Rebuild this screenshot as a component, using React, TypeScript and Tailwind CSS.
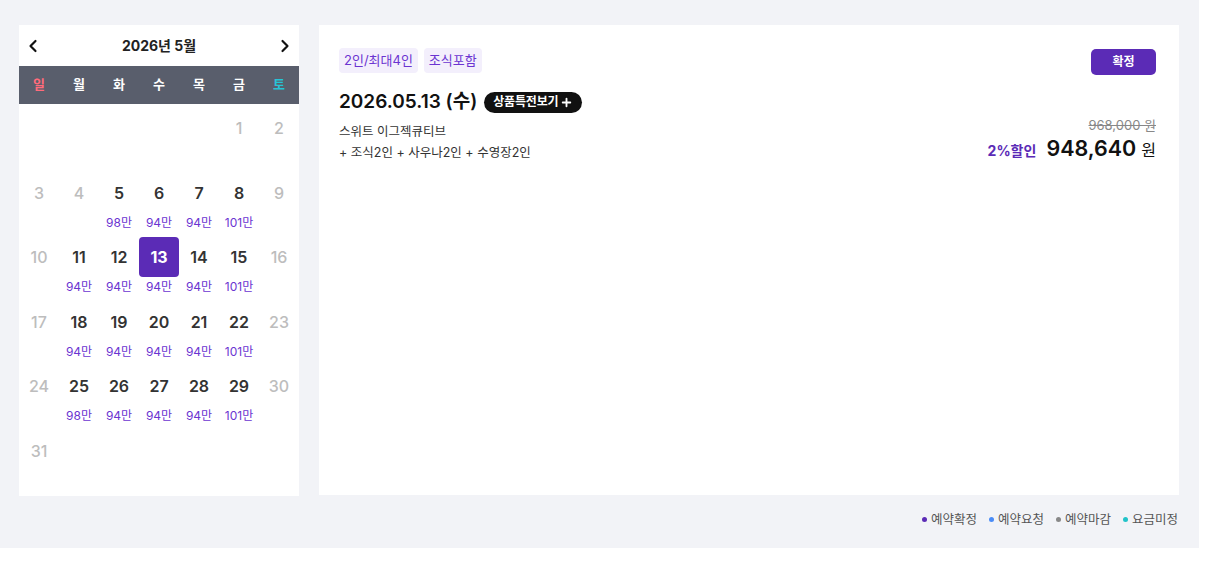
import { ChevronLeft, ChevronRight, Plus } from "lucide-react";

const prices: Record<number, string> = {
    5: "98만", 6: "94만", 7: "94만", 8: "101만",
    11: "94만", 12: "94만", 13: "94만", 14: "94만", 15: "101만",
    18: "94만", 19: "94만", 20: "94만", 21: "94만", 22: "101만",
    25: "98만", 26: "94만", 27: "94만", 28: "94만", 29: "101만",
};

const weekdays = ["일", "월", "화", "수", "목", "금", "토"];

const Calendar = () => {
    // 2026년 5월 1일은 금요일
    const cells: (number | null)[] = [null, null, null, null, null];
    for (let d = 1; d <= 31; d++) cells.push(d);
    while (cells.length % 7 !== 0) cells.push(null);
    const rows: (number | null)[][] = [];
    for (let i = 0; i < cells.length; i += 7) rows.push(cells.slice(i, i + 7));

    return (
        <div className="w-[280px] shrink-0 bg-white self-start">
            <div className="h-[41px] flex items-center justify-between px-[4px]">
                <ChevronLeft size={20} strokeWidth={2.6} className="text-[#111]" />
                <span className="text-[14px] font-bold text-[#222]">2026년 5월</span>
                <ChevronRight size={20} strokeWidth={2.6} className="text-[#111]" />
            </div>
            <div className="grid grid-cols-7 h-[38px] bg-[#595e6c] items-center text-center text-[13px] font-bold text-white">
                {weekdays.map((w, i) => (
                    <span key={w} className={i === 0 ? "text-[#ff6b7b]" : i === 6 ? "text-[#27c3d6]" : ""}>
                        {w}
                    </span>
                ))}
            </div>
            <div className="pb-[4px]">
                {rows.map((row, ri) => (
                    <div key={ri} className="grid grid-cols-7 h-[64.6px] pt-[4px]">
                        {row.map((d, ci) => {
                            if (d === null) return <div key={ci} />;
                            const price = prices[d];
                            const selected = d === 13;
                            return (
                                <div key={ci} className="flex flex-col items-center">
                                    <div
                                        className={
                                            "w-10 h-10 flex items-center justify-center rounded-[4px] text-[16px] " +
                                            (selected
                                                ? "bg-[#5b2bb6] text-white font-bold"
                                                : price
                                                ? "text-[#333] font-semibold"
                                                : "text-[#bdbdbd] font-medium")
                                        }
                                    >
                                        {d}
                                    </div>
                                    {price && (
                                        <span className="h-[20px] leading-[20px] text-[12px] text-[#6b34d1]">{price}</span>
                                    )}
                                </div>
                            );
                        })}
                    </div>
                ))}
            </div>
        </div>
    );
};

const App = () => {
    return (
        <div className="w-[1199px] h-[548px] bg-[#f2f3f7] pt-[25px] pl-[19px] pr-[20px] font-['Inter','Noto_Sans_CJK_KR',sans-serif]">
            <div className="flex gap-[20px] items-start">
                <Calendar />
                <div className="flex-1 h-[470px] bg-white pl-[20px] pr-[23px] pt-[23px]">
                    <div className="flex justify-between items-start">
                        <div className="flex gap-[6px]">
                            <span className="h-[25px] px-[5px] flex items-center rounded-[4px] bg-[#f3effc] text-[13px] text-[#6b34d1]">
                                2인/최대4인
                            </span>
                            <span className="h-[25px] px-[5px] flex items-center rounded-[4px] bg-[#f3effc] text-[13px] text-[#6b34d1]">
                                조식포함
                            </span>
                        </div>
                        <button className="w-[65px] h-[26px] mt-[1px] rounded-[5px] bg-[#5b2bb6] text-white text-[12px] font-bold">
                            확정
                        </button>
                    </div>
                    <div className="flex justify-between items-end mt-[13px]">
                        <div>
                            <div className="flex items-center gap-[7px]">
                                <span className="text-[19px] font-semibold text-[#111] leading-[28px]">2026.05.13 (수)</span>
                                <span className="h-[21px] px-[9px] flex items-center gap-[2px] rounded-full bg-[#111] text-white text-[12px] font-bold tracking-[-0.2px]">
                                    상품특전보기
                                    <Plus size={13} strokeWidth={3.4} />
                                </span>
                            </div>
                            <p className="mt-[5px] text-[12.5px] text-[#333] leading-[21px]">스위트 이그젝큐티브</p>
                            <p className="text-[12.5px] text-[#333] leading-[21px]">+ 조식2인 + 사우나2인 + 수영장2인</p>
                        </div>
                        <div className="flex flex-col items-end mb-[1px]">
                            <span className="text-[13px] text-[#888] line-through leading-[18px]">968,000 원</span>
                            <div className="flex items-baseline">
                                <span className="text-[14px] font-bold text-[#5b2bb6] mr-[10px]">2%할인</span>
                                <span className="text-[21.5px] font-semibold text-[#111] leading-[28px]">948,640</span>
                                <span className="text-[16px] text-[#111] ml-[5px]">원</span>
                            </div>
                        </div>
                    </div>
                </div>
            </div>
            <div className="flex justify-end gap-[12px] mt-[15px] pr-[1px] text-[12.5px] text-[#555]">
                {[
                    ["예약확정", "bg-[#5b2bb6]"],
                    ["예약요청", "bg-[#4a8cf7]"],
                    ["예약마감", "bg-[#888]"],
                    ["요금미정", "bg-[#22c3c9]"],
                ].map(([label, color]) => (
                    <span key={label} className="flex items-center gap-[4px]">
                        <span className={"w-[5px] h-[5px] rounded-full " + color} />
                        {label}
                    </span>
                ))}
            </div>
        </div>
    );
};

export default App;
